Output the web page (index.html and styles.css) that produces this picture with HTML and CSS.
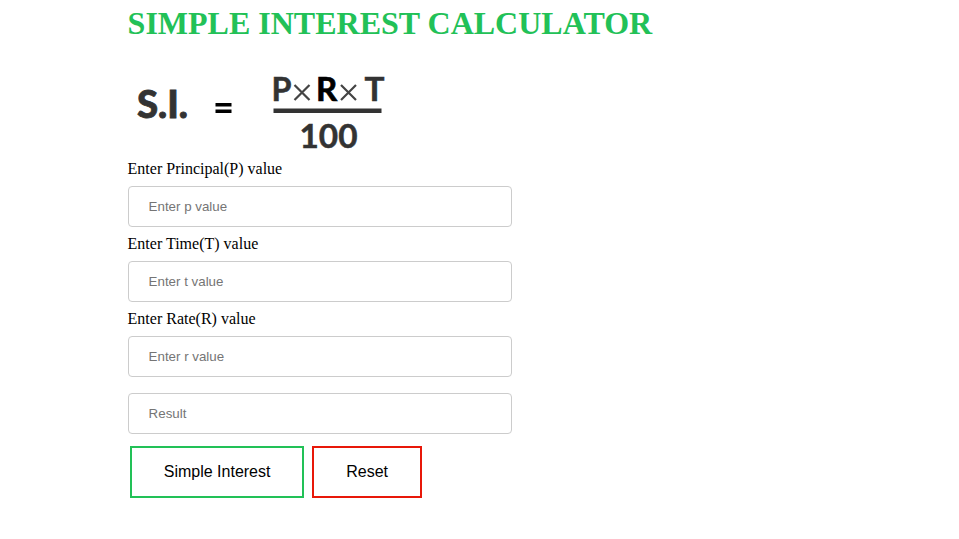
FILE: index.html
```html
<!DOCTYPE html>
<html lang="en">
<head>
<meta charset="utf-8">
<title>Simple Interest Calculator</title>
<link rel="stylesheet" href="styles.css">
</head>
<body>
<main class="calculator">
<h1>SIMPLE INTEREST CALCULATOR</h1>
<svg class="formula" viewBox="0 0 270 90" role="img" aria-label="Simple interest formula">
<text class="name" x="9" y="50" textLength="51" lengthAdjust="spacingAndGlyphs">S.I.</text>
<path class="dark" d="M87.5 35h16v3.4h-16zM87.5 41.5h16v3.6h-16z"/>
<text x="143.500" y="33" textLength="20" lengthAdjust="spacingAndGlyphs">P</text>
<path class="times" d="M166.5 17l15 15M181.5 17l-15 15M213 17l15 15M228 17l-15 15"/>
<text class="dark" x="188" y="33">R</text>
<text x="236.5" y="33" textLength="20" lengthAdjust="spacingAndGlyphs">T</text>
<path class="bar" d="M145.5 40.5h108v4.500h-108z"/>
<text x="171.5" y="80" textLength="58" lengthAdjust="spacingAndGlyphs">100</text>
</svg>
<form>
<label for="p">Enter Principal(P) value</label>
<input type="text" id="p" placeholder="Enter p value">
<label for="t">Enter Time(T) value</label>
<input type="text" id="t" placeholder="Enter t value">
<label for="r">Enter Rate(R) value</label>
<input type="text" id="r" placeholder="Enter r value">
<input type="text" placeholder="Result" class="result">
<div class="actions">
<button type="button" class="calculate">Simple Interest</button>
<button type="reset" class="reset">Reset</button>
</div>
</form>
</main>
</body>
</html>
```
FILE: styles.css
```css
body {
  margin: 0;
  background: #fff;
  font: 16px "Liberation Serif", serif;
  color: #000;
}
.calculator {
  margin-left: 127.6px;
  padding-top: 5px;
}
h1 {
  margin: 0;
  font-size: 32px;
  line-height: 37px;
  color: #22c157;
}
.formula {
  display: block;
  width: 270px;
  height: 90px;
  margin-top: 26px;
  font: bold 33px Lato, sans-serif;
  fill: #333;
}
.formula text { stroke: #333; stroke-width: 0.5; }
.formula .name { font-size: 37px; font-weight: 900; stroke-width: 0.8; }
.formula .dark { fill: #000; }
.formula text.dark { stroke: #000; stroke-width: 0.7; }
.formula .times { stroke: #444; stroke-width: 2.2; fill: none; }
form { width: 384px; padding-top: 2px; }
label { display: block; line-height: 18px; }
input {
  display: block;
  box-sizing: border-box;
  width: 384px;
  height: 41px;
  margin: 8px 0;
  padding: 12px 20px;
  border: 1px solid #ccc;
  border-radius: 4px;
  font: 13.333px "Liberation Sans", sans-serif;
}
.result { margin-top: 16px; }
.actions { display: flex; gap: 8px; margin: 12px 0 0 2px; }
button {
  box-sizing: border-box;
  height: 52px;
  padding: 0 0 0 1px;
  background: #fff;
  color: #000;
  font: 16px "Liberation Sans", sans-serif;
}
.calculate { width: 174px; border: 2px solid #22c157; }
.reset { width: 110px; border: 2px solid #e81809; }
```
